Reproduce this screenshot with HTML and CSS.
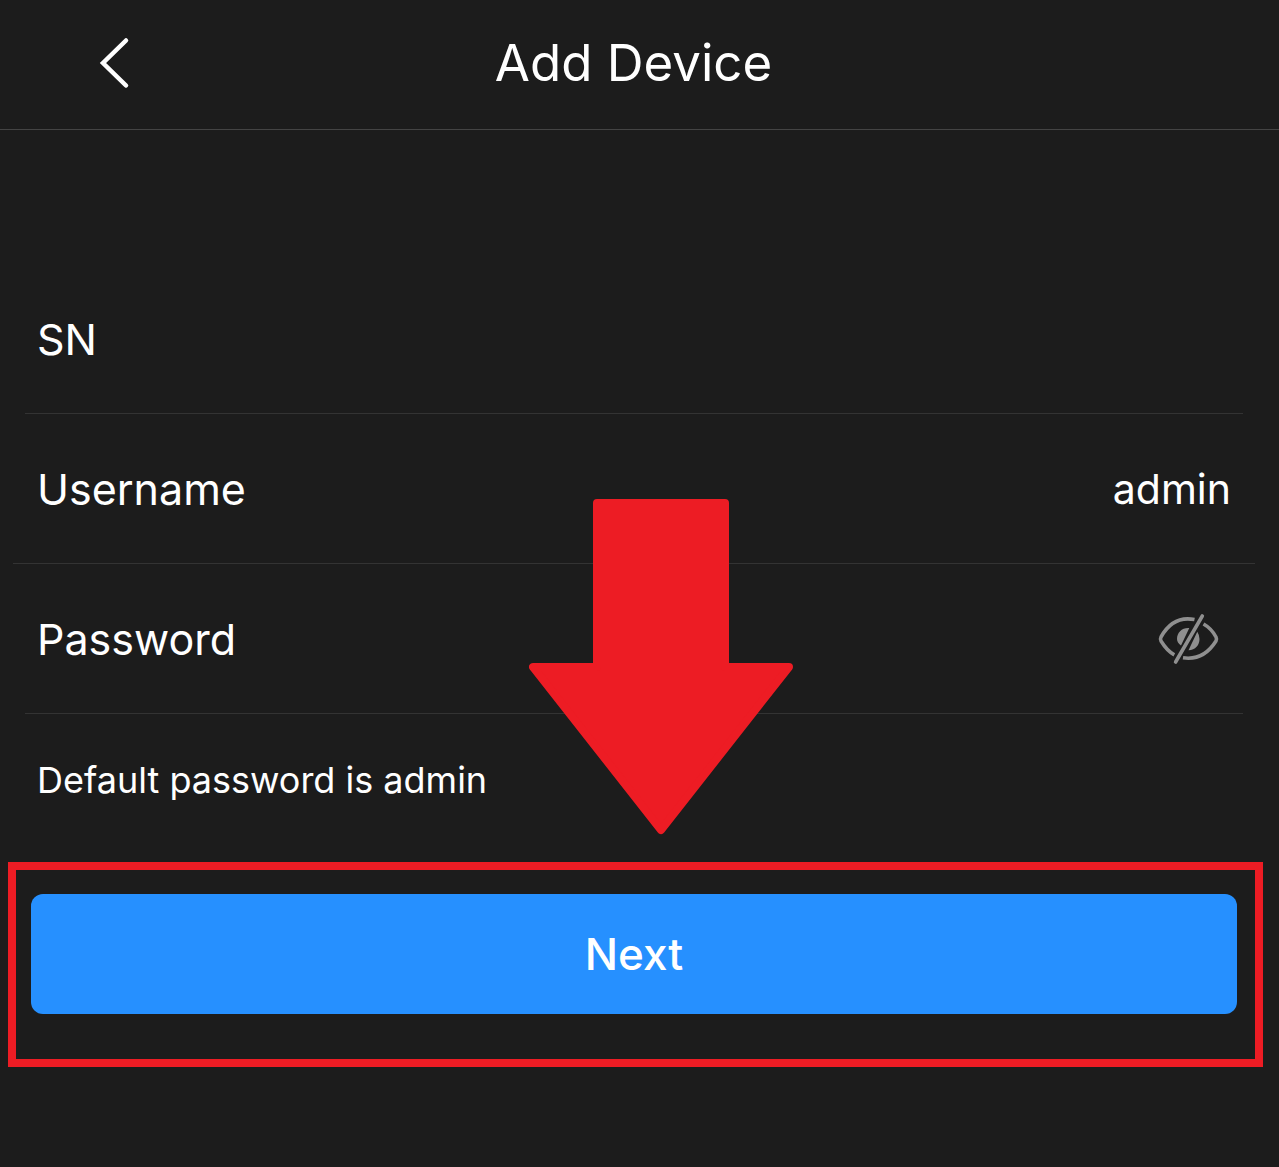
FILE: index.html
```html
<!DOCTYPE html>
<html lang="en">
<head>
<meta charset="utf-8">
<meta name="viewport" content="width=device-width, initial-scale=1">
<title>Add Device</title>
<link rel="stylesheet" href="styles.css">
</head>
<body>
<header class="topbar">
  <button class="back" type="button" aria-label="Back">
    <svg width="32" height="52" viewBox="0 0 32 52" aria-hidden="true"><path d="M28 3.500 5 26 28 48.500" fill="none" stroke="#fff" stroke-width="4.500" stroke-linecap="round" stroke-linejoin="miter"/></svg>
  </button>
  <h1 class="title">Add Device</h1>
</header>
<main>
  <form class="form">
    <div class="row">
      <label class="label" for="sn">SN</label>
      <input class="field" id="sn" type="text">
    </div>
    <div class="row row-wide">
      <label class="label" for="username">Username</label>
      <input class="field" id="username" type="text" value="admin">
    </div>
    <div class="row">
      <label class="label" for="password">Password</label>
      <input class="field" id="password" type="password">
      <button class="reveal" type="button" aria-label="Show password">
        <svg width="64" height="54" viewBox="0 0 64 54" fill="none" stroke="#8f8f8f" stroke-width="3.600" stroke-linecap="butt" aria-hidden="true">
          <path d="M37.500 7.600C22 4.500 11 12.500 4 25Q3 27 4 29C8 35.500 12 40 17.300 42.800"/>
          <path d="M46.500 12C52 15 56 19.500 59 25Q60 27 59 29C51.500 41 41 48 26 45.800"/>
          <path d="M32.300 16C25 15.500 20 20.500 20 27Q20 30.500 24 33.500ZM40.300 19.700 31.500 38.300C38.500 38 42.500 33 42.500 27Q42.500 23 40.300 19.700Z" fill="#8f8f8f" stroke="none"/>
          <path d="M45.300 4 18.600 50" stroke-linecap="round"/>
        </svg>
      </button>
    </div>
    <p class="hint">Default password is admin</p>
    <div class="highlight">
      <button class="next" type="submit">Next</button>
    </div>
    <svg class="arrow" width="264" height="336" viewBox="0 0 264 336" aria-hidden="true"><path d="M68 4H196V168H260L132 331 4 168H68Z" fill="#ed1c24" stroke="#ed1c24" stroke-width="8" stroke-linejoin="round"/></svg>
  </form>
</main>
</body>
</html>
```
FILE: styles.css
```css
* {
  box-sizing: border-box;
}

body {
  margin: 0;
  min-height: 100vh;
  background: #1c1c1c;
  color: #fff;
  font-family: Inter, "Noto Sans", sans-serif;
}

button {
  border: 0;
  padding: 0;
  background: none;
  color: inherit;
  font: inherit;
  cursor: pointer;
}

.topbar {
  display: grid;
  grid-template-columns: 130px 1fr 130px;
  align-items: center;
  height: 130px;
  padding: 0 12px 4px 0;
  border-bottom: 1px solid #444;
}

.back {
  display: flex;
  justify-self: end;
}

.title {
  margin: 0;
  font-size: 51px;
  line-height: 64px;
  font-weight: 400;
  text-align: center;
}

.form {
  position: relative;
  padding-top: 134px;
}

.row {
  display: flex;
  align-items: center;
  gap: 24px;
  height: 150px;
  margin: 0 36px 0 25px;
  padding: 0 12px;
  border-bottom: 1px solid #333;
}

.row-wide {
  margin: 0 24px 0 13px;
  padding: 0 24px;
}

.label {
  font-size: 43px;
  line-height: 56px;
}

.field {
  flex: 1;
  min-width: 0;
  border: 0;
  outline: 0;
  padding: 0;
  background: none;
  color: inherit;
  font: inherit;
  font-size: 41px;
  line-height: 56px;
  text-align: right;
}

.reveal {
  display: flex;
  margin-right: 10px;
}

.hint {
  margin: 0;
  padding: 42px 37px 0;
  font-size: 36px;
  line-height: 48px;
}

.highlight {
  margin: 58px 16px 100px 8px;
  padding: 24px 18px 45px 15px;
  border: 8px solid #ed1c24;
}

.next {
  display: block;
  width: 100%;
  height: 120px;
  border-radius: 12px;
  background: #2690ff;
  font-size: 44px;
  font-weight: 500;
}

.arrow {
  position: absolute;
  top: 369px;
  left: calc(50% - 111px);
  pointer-events: none;
}
```
